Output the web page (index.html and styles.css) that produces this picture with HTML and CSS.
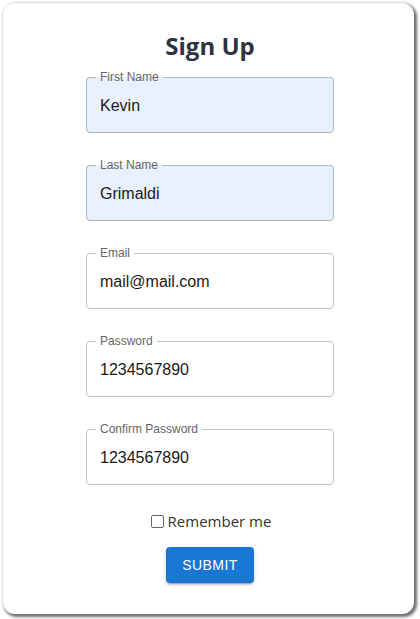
FILE: index.html
```html
<!DOCTYPE html>
<html lang="en">
<head>
<meta charset="utf-8">
<title>Sign Up</title>
<link rel="stylesheet" href="styles.css">
</head>
<body>
<main class="card">
  <h1 class="title">Sign Up</h1>
  <form class="form">
    <fieldset class="field filled">
      <legend>First Name</legend>
      <input type="text" value="Kevin">
    </fieldset>
    <fieldset class="field filled">
      <legend>Last Name</legend>
      <input type="text" value="Grimaldi">
    </fieldset>
    <fieldset class="field">
      <legend>Email</legend>
      <input type="text" value="mail@mail.com">
    </fieldset>
    <fieldset class="field">
      <legend>Password</legend>
      <input type="text" value="1234567890">
    </fieldset>
    <fieldset class="field">
      <legend>Confirm Password</legend>
      <input type="text" value="1234567890">
    </fieldset>
    <label class="remember"><span class="box"></span>Remember me</label>
    <button type="button" class="submit">Submit</button>
  </form>
</main>
</body>
</html>
```
FILE: styles.css
```css
html, body {
  margin: 0;
  padding: 0;
  background: #ffffff;
}
body {
  width: 420px;
  height: 619px;
  overflow: hidden;
  padding: 3px 6px 5px 3px;
  box-sizing: border-box;
}
.card {
  height: 611px;
  width: 411px;
  box-sizing: border-box;
  background: #fff;
  border-radius: 12px;
  box-shadow: 2px 2px 3px 1px rgba(60, 64, 72, 0.75), 0 0 3px rgba(0,0,0,0.15);
  display: flex;
  flex-direction: column;
  align-items: center;
  padding-top: 26px;
  padding-left: 3px;
}
.title {
  margin: 0;
  font-family: "Open Sans", "Noto Sans", sans-serif;
  font-weight: 700;
  font-size: 24px;
  line-height: 34px;
  color: #2d3340;
}
.form {
  display: flex;
  flex-direction: column;
  align-items: center;
  margin-top: 8px;
}
.field {
  width: 248px;
  box-sizing: border-box;
  margin: 0 0 26px 0;
  padding: 0 13px 9px 13px;
  border: 1px solid #c4c4c4;
  border-radius: 4px;
  background: #fff;
  min-width: 0;
}
.field.filled {
  background: #e8f0fe;
  border-color: #adb5c6;
}
.field legend {
  font-family: "Liberation Sans", Arial, sans-serif;
  font-size: 12px;
  line-height: 12px;
  color: #666;
  padding: 0 4px;
  margin-left: -4px;
}
.field input {
  display: block;
  width: 100%;
  height: 40px;
  box-sizing: border-box;
  border: 0;
  padding: 5px 0 0 0;
  margin: 0;
  background: transparent;
  font-family: "Liberation Sans", Arial, sans-serif;
  font-size: 16px;
  color: #1a1a1a;
  outline: none;
}
.remember {
  display: flex;
  align-items: center;
  gap: 4px;
  font-family: "Open Sans", "Noto Sans", sans-serif;
  font-size: 15px;
  color: #333;
  margin: 0 0 0 2px;
  height: 20px;
}
.box {
  width: 11px;
  height: 11px;
  border: 1px solid #666;
  border-radius: 2px;
  background: #fff;
}
.submit {
  margin-top: 16px;
  width: 88px;
  height: 36px;
  border: 0;
  border-radius: 4px;
  background: #1976d2;
  color: #fff;
  font-family: "Liberation Sans", Arial, sans-serif;
  font-size: 14px;
  letter-spacing: 0.4px;
  text-transform: uppercase;
  box-shadow: 0 3px 1px -2px rgba(0,0,0,0.2), 0 2px 2px 0 rgba(0,0,0,0.14), 0 1px 5px 0 rgba(0,0,0,0.12);
}
```
